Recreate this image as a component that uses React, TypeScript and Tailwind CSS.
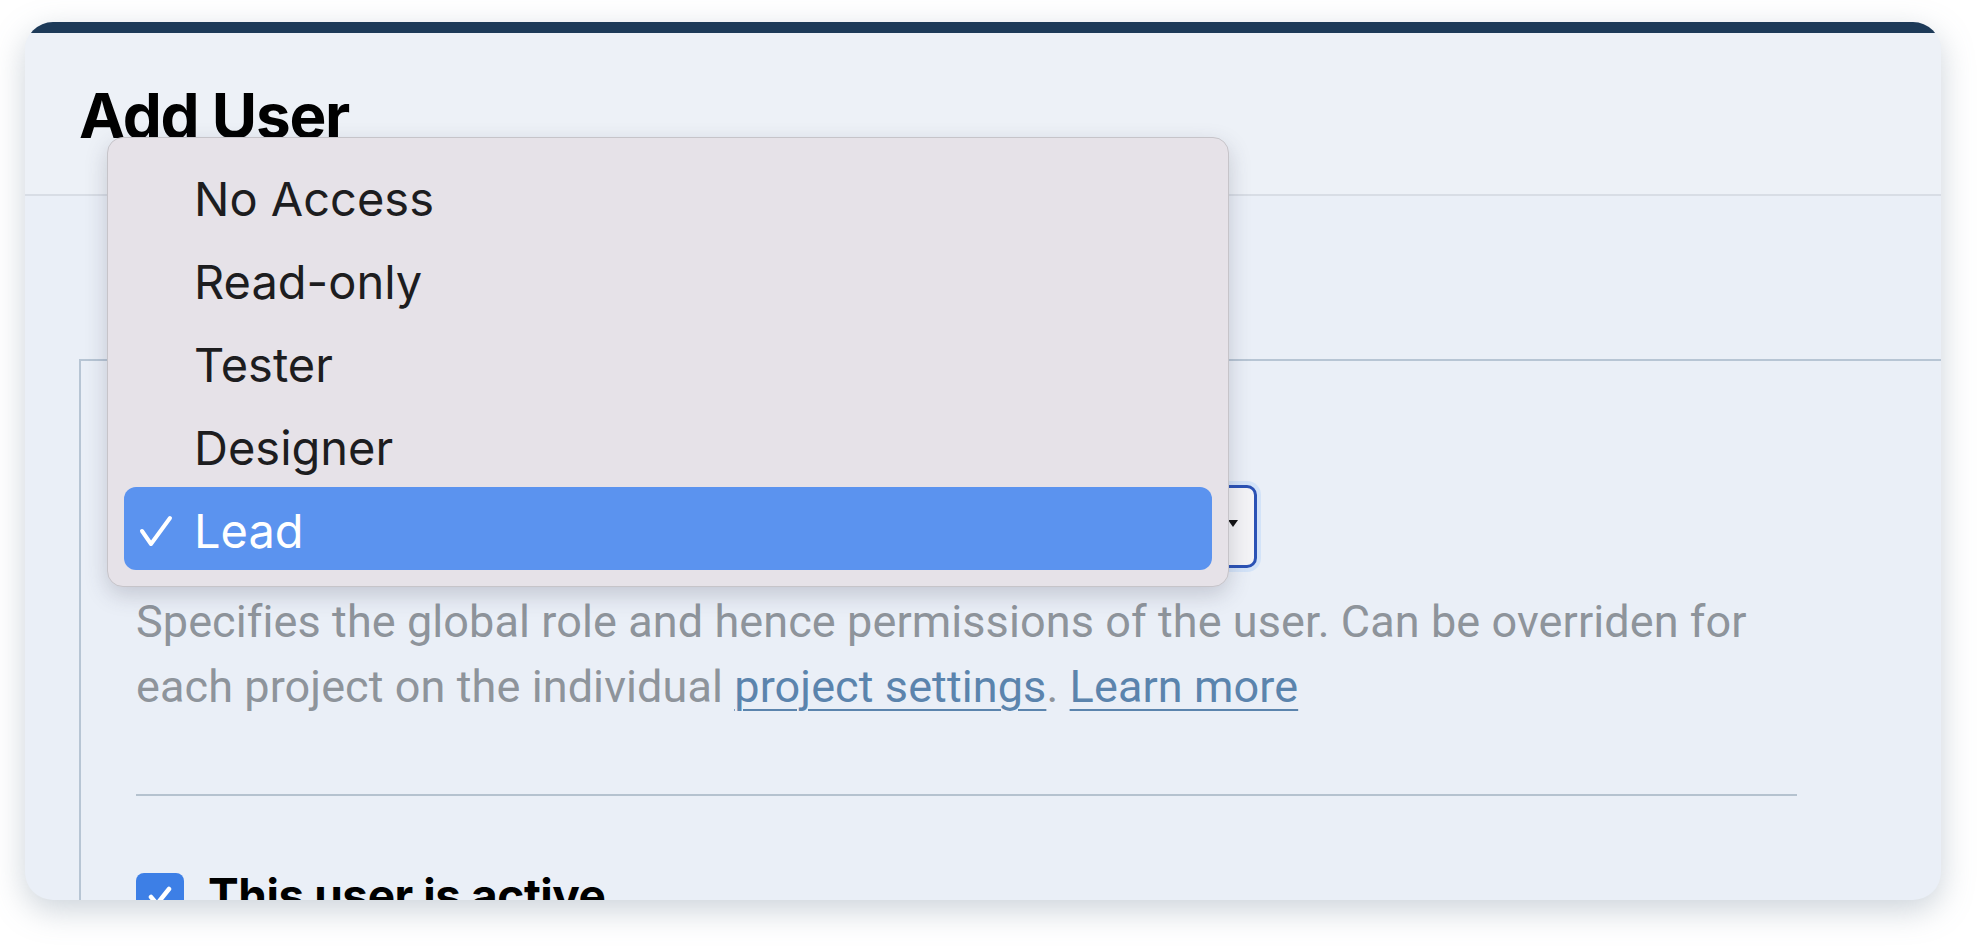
import React from "react";

const items = ["No Access", "Read-only", "Tester", "Designer", "Lead"];

export default function App() {
  return (
    <div className="w-[1987px] h-[946px] bg-white pt-[22px] pl-[25px] pr-[46px] font-['Inter',sans-serif]">
      <div className="relative h-[878px] rounded-[28px] overflow-hidden bg-[#eaeff7] shadow-[0_10px_32px_rgba(110,130,150,0.35)] flex flex-col">
        <div className="h-[11px] shrink-0 bg-[#1d3a58]" />
        <header className="h-[163px] shrink-0 border-b-2 border-[#d8dde5] bg-[#edf1f7] pl-[54px] pt-[52px]">
          <h1 className="text-[62px] leading-[62px] font-bold tracking-[-0.02em] text-black">Add User</h1>
        </header>
        <div className="h-[163px] shrink-0" />
        <section className="ml-[54px] flex-1 border-l-2 border-t-2 border-[#b7c5d4] pl-[55px] pr-[144px]">
          <div className="mt-[124px] relative h-[83px] w-[1121px] rounded-[10px] border-[3px] border-[#2b52b5] bg-[#f3f3f6] ring-4 ring-[#d3e3f8]">
            <svg className="absolute right-[14px] top-[29px]" width="14" height="12" viewBox="0 0 14 12">
              <path d="M2 3 L12 3 L7 10 Z" fill="#111" />
            </svg>
          </div>
          <p className="mt-[21px] font-['Roboto',sans-serif] text-[45px] leading-[65px] tracking-[0.002em] text-[#8e949b] whitespace-nowrap">
            Specifies the global role and hence permissions of the user. Can be overriden for
            <br />
            each project on the individual{" "}
            <a className="text-[#5b84ad] underline decoration-2 underline-offset-[7px]">project settings</a>.{" "}
            <a className="text-[#5b84ad] underline decoration-2 underline-offset-[7px]">Learn more</a>
          </p>
          <div className="mt-[75px] h-[2px] bg-[#b5c2cf]" />
          <div className="mt-[77px] flex items-start gap-[24px]">
            <div className="h-[48px] w-[48px] shrink-0 rounded-[8px] bg-[#3d7fe6] flex items-center justify-center">
              <svg width="30" height="30" viewBox="0 0 30 30">
                <path d="M6 15 L12 22 L24 7" fill="none" stroke="white" strokeWidth="4.5" strokeLinecap="round" strokeLinejoin="round" />
              </svg>
            </div>
            <span className="text-[46px] leading-[44px] font-bold tracking-[-0.01em] text-black">This user is active</span>
          </div>
        </section>

        <div className="absolute left-[82px] top-[115px] w-[1122px] rounded-[16px] border border-[#c6c4c9] bg-[#e6e2e8] pt-[17px] px-[16px] pb-[16px] shadow-[0_8px_22px_rgba(60,60,80,0.22)]">
          {items.map((it) => {
            const active = it === "Lead";
            return (
              <div
                key={it}
                className={
                  active
                    ? "relative h-[83px] rounded-[12px] bg-[#5b93ef] flex items-center pl-[70px] pt-[3px] text-[47px] text-white"
                    : "relative h-[83px] flex items-center pl-[70px] pt-[3px] text-[47px] text-[#1d1d1f]"
                }
              >
                {active && (
                  <svg className="absolute left-[14px] top-[28px]" width="36" height="34" viewBox="0 0 36 34">
                    <path d="M4 16 L13 29 L32 3" fill="none" stroke="white" strokeWidth="4" strokeLinecap="round" strokeLinejoin="round" />
                  </svg>
                )}
                <span className="leading-none">{it}</span>
              </div>
            );
          })}
        </div>
      </div>
    </div>
  );
}
